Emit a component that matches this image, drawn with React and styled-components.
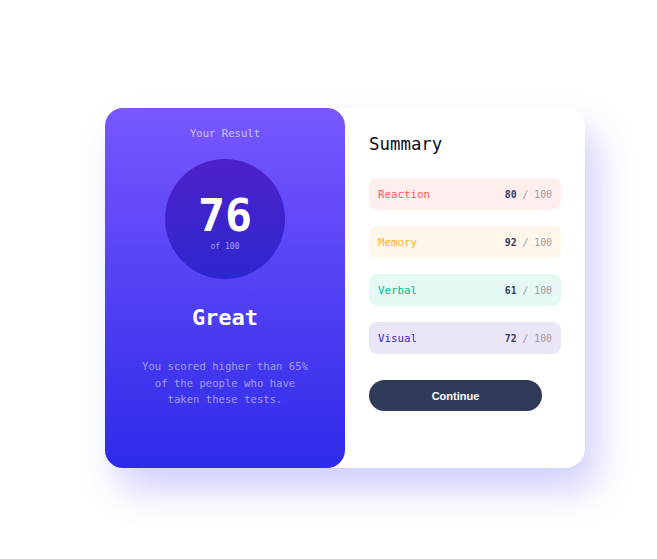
import React from "react";
import styled, { createGlobalStyle } from "styled-components";

const Global = createGlobalStyle`
  html, body { margin: 0; padding: 0; background: #ffffff; }
  body { font-family: "DejaVu Sans Mono", monospace; }
  * { box-sizing: border-box; }
`;

const Page = styled.div`
  width: 657px;
  height: 559px;
  display: flex;
  justify-content: flex-start;
  align-items: flex-start;
  padding: 108px 0 0 105px;
`;

const Card = styled.div`
  width: 480px;
  height: 360px;
  display: grid;
  grid-template-columns: 240px 240px;
  background: #ffffff;
  border-radius: 20px;
  box-shadow: 12px 22px 36px rgba(110, 110, 245, 0.32);
`;

const ResultPanel = styled.section`
  border-radius: 18px;
  background: linear-gradient(180deg, #7857ff 0%, #2e2be9 100%);
  display: flex;
  flex-direction: column;
  align-items: center;
  padding-top: 17px;
  text-align: center;
`;

const Eyebrow = styled.h2`
  margin: 0;
  font-size: 10.6px;
  font-weight: 400;
  line-height: 16px;
  color: #c8c7ff;
`;

const ScoreCircle = styled.div`
  margin-top: 18px;
  width: 120px;
  height: 120px;
  border-radius: 50%;
  background: linear-gradient(180deg, #4d21c9 0%, rgba(37, 33, 201, 0.85) 100%);
  display: flex;
  flex-direction: column;
  align-items: center;
  justify-content: center;
  padding-top: 6px;
`;

const Score = styled.div`
  font-size: 45px;
  font-weight: 700;
  line-height: 46px;
  color: #ffffff;
`;

const OutOf = styled.div`
  margin-top: 3px;
  font-size: 8px;
  line-height: 10px;
  color: #a6a4ff;
`;

const Verdict = styled.h1`
  margin: 26px 0 0;
  font-size: 22px;
  font-weight: 700;
  line-height: 26px;
  color: #ffffff;
`;

const Blurb = styled.p`
  margin: 27px 0 0;
  width: 170px;
  font-size: 10.6px;
  line-height: 16.5px;
  color: #a29ef8;
`;

const SummaryPanel = styled.section`
  padding: 24px 24px 0 24px;
  display: flex;
  flex-direction: column;
`;

const Title = styled.h2`
  margin: 0;
  font-size: 17.4px;
  font-weight: 400;
  line-height: 24px;
  color: #0d0d1a;
`;

const List = styled.ul`
  list-style: none;
  margin: 22px 0 0;
  padding: 0;
  display: flex;
  flex-direction: column;
  gap: 16px;
`;

const Row = styled.li`
  height: 32px;
  border-radius: 8px;
  padding: 0 9px;
  display: flex;
  align-items: center;
  justify-content: space-between;
  background: ${(p) => p.$bg};
`;

const Label = styled.span`
  font-size: 10.8px;
  color: ${(p) => p.$color};
`;

const Value = styled.span`
  font-size: 9.8px;
  font-weight: 700;
  color: #303b5a;
`;

const Max = styled.span`
  font-weight: 400;
  color: #9a9aa9;
`;

const Button = styled.button`
  margin-top: 26px;
  width: 173px;
  height: 31px;
  border: none;
  border-radius: 16px;
  background: #303b5a;
  color: #ffffff;
  font-family: "Liberation Sans", Arial, sans-serif;
  font-size: 11px;
  font-weight: 600;
  cursor: pointer;
`;

const items = [
  { label: "Reaction", score: 80, color: "#ff5757", bg: "#ffeeee" },
  { label: "Memory", score: 92, color: "#ffb01f", bg: "#fff7e9" },
  { label: "Verbal", score: 61, color: "#00bb8f", bg: "#e5f8f3" },
  { label: "Visual", score: 72, color: "#3a1fcc", bg: "#ebe6f7" },
];

export default function App() {
  return (
    <>
      <Global />
      <Page>
        <Card>
          <ResultPanel>
            <Eyebrow>Your Result</Eyebrow>
            <ScoreCircle>
              <Score>76</Score>
              <OutOf>of 100</OutOf>
            </ScoreCircle>
            <Verdict>Great</Verdict>
            <Blurb>You scored higher than 65% of the people who have taken these tests.</Blurb>
          </ResultPanel>
          <SummaryPanel>
            <Title>Summary</Title>
            <List>
              {items.map((it) => (
                <Row key={it.label} $bg={it.bg}>
                  <Label $color={it.color}>{it.label}</Label>
                  <Value>
                    {it.score} <Max>/ 100</Max>
                  </Value>
                </Row>
              ))}
            </List>
            <Button>Continue</Button>
          </SummaryPanel>
        </Card>
      </Page>
    </>
  );
}
